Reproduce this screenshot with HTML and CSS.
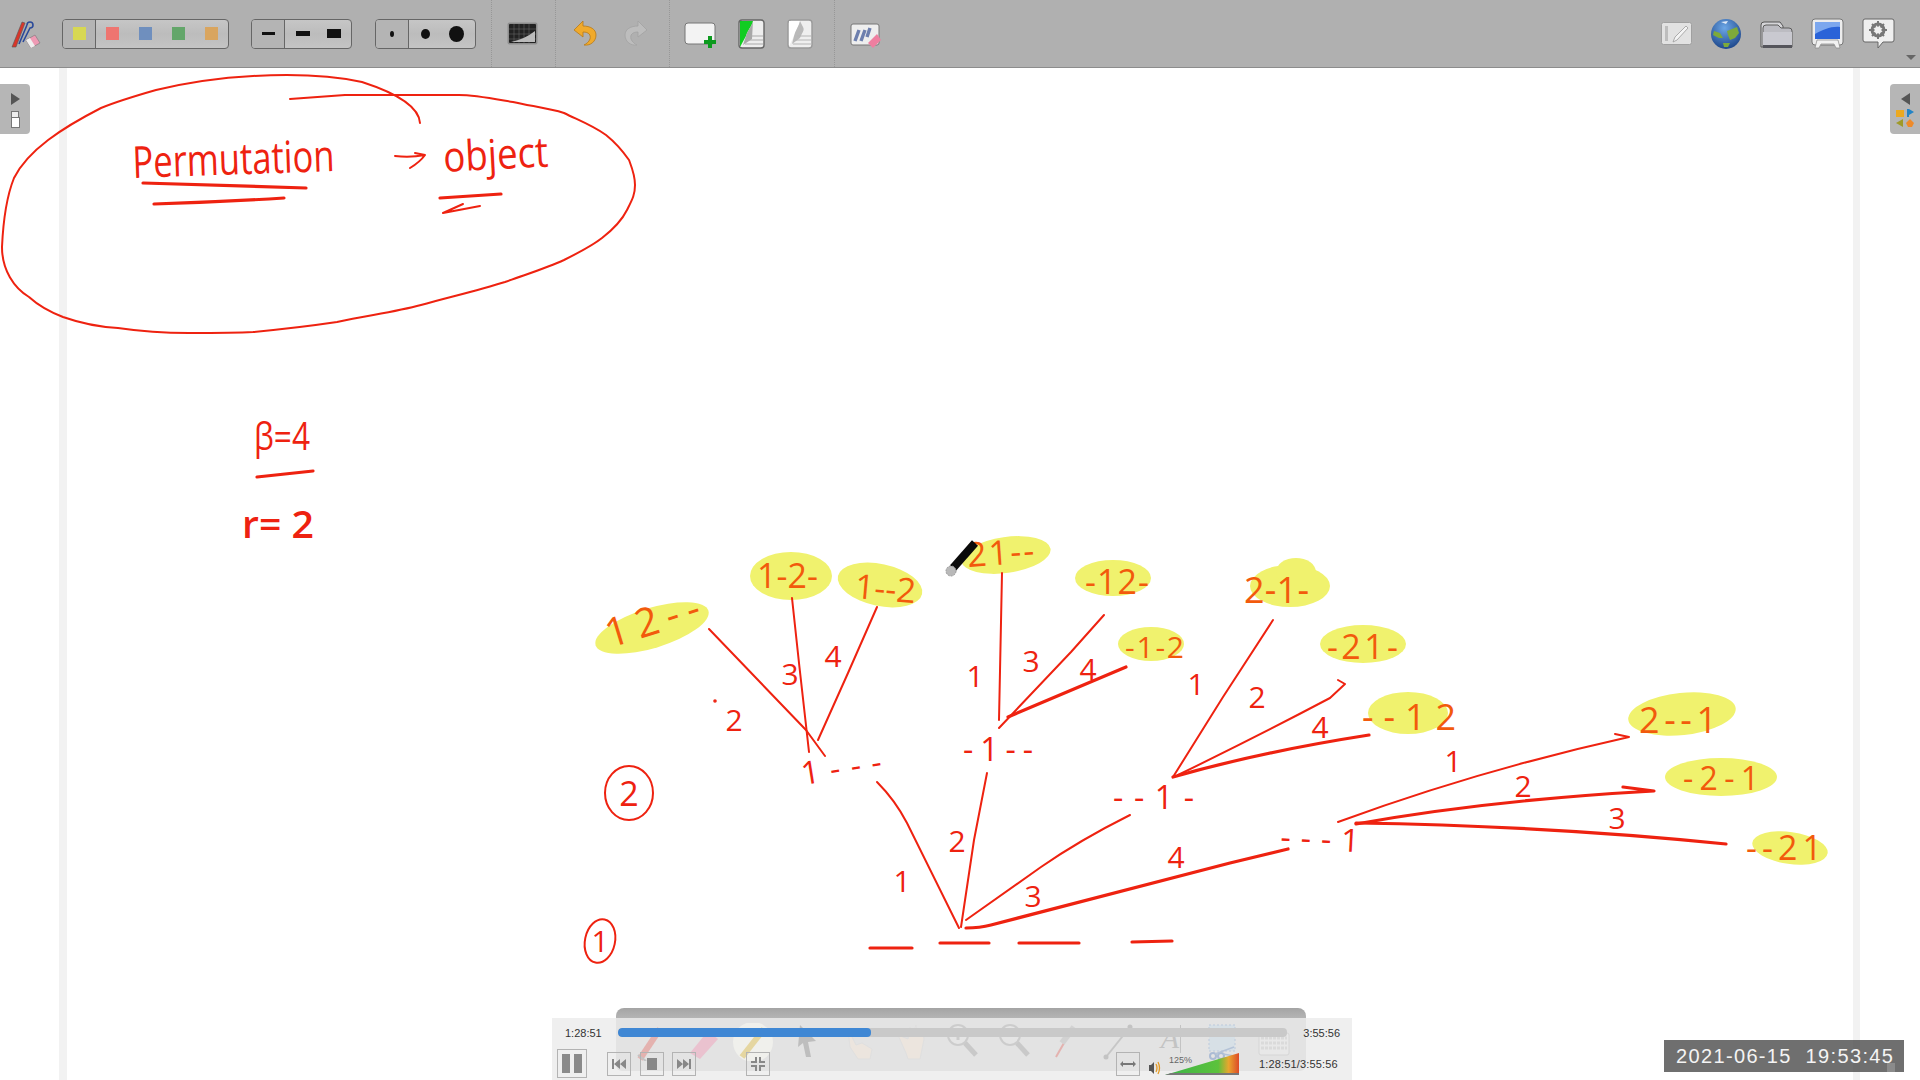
FILE: index.html
```html
<!DOCTYPE html>
<html lang="en">

<head>
    <meta charset="UTF-8">
    <title>Recording playback</title>
    <link rel="stylesheet" href="styles.css">
</head>

<body>
    <div class="app">
        <header class="toolbar">
            <div class="tool-section sec-pens">
                <svg class="ic-pens" width="31" height="28" viewBox="0 0 31 28">
                    <path d="M2 27 L12 2 L15 3 L6 27 Z" fill="#d8362a" stroke="#555" stroke-width=".6" />
                    <path d="M9 24 L17 5 M17 5 a3 3 0 1 1 3 3 L13 22" fill="none" stroke="#2b4a9a" stroke-width="1.6" />
                    <path d="M16 20 L25 15 L30 23 L21 28 Z" fill="#ee9ab4" stroke="#777" stroke-width=".6" />
                    <path d="M16 20 L20 18 L25 26 L21 28 Z" fill="#eee" />
                </svg>
                <div class="seg seg-colors">
                    <span class="cell cell-on"><i class="swatch sw-yellow"></i></span>
                    <span class="cell-rest">
                        <i class="swatch sw-red"></i>
                        <i class="swatch sw-blue"></i>
                        <i class="swatch sw-green"></i>
                        <i class="swatch sw-orange"></i>
                    </span>
                </div>
                <div class="seg seg-mid">
                    <span class="cell cell-on"><i class="bar bar1"></i></span>
                    <span class="cell-rest">
                        <i class="bar bar2"></i>
                        <i class="bar bar3"></i>
                    </span>
                </div>
                <div class="seg seg-mid seg-dots">
                    <span class="cell cell-on"><i class="dot dot1"></i></span>
                    <span class="cell-rest">
                        <i class="dot dot2"></i>
                        <i class="dot dot3"></i>
                    </span>
                </div>
            </div>
            <div class="tool-section sec-board">
                <svg width="31" height="23" viewBox="0 0 31 23">
                    <rect x=".5" y=".5" width="30" height="22" rx="2" fill="#8d8d8d" />
                    <rect x="2" y="2" width="27" height="19" rx="1" fill="#222" />
                    <path d="M7 2 V21 M12 2 V21 M17 2 V21 M22 2 V21 M2 7 H29 M2 12 H29 M2 17 H29" stroke="#666" stroke-width=".6" />
                    <path d="M4 20 Q18 17 28 9 V20 Z" fill="#bbb" />
                </svg>
            </div>
            <div class="tool-section sec-history">
                <svg width="24" height="27" viewBox="0 0 24 27">
                    <path d="M10 1 L1 10 L10 17 V12 C16 12 18 15 17 19 C16 22 13 24 11 25 C18 26 23 21 23 15 C23 9 17 6 10 6 Z" fill="#f0aa2c" stroke="#b87a18" stroke-width=".8" />
                </svg>
                <svg width="24" height="27" viewBox="0 0 24 27">
                    <path d="M14 1 L23 10 L14 17 V12 C8 12 6 15 7 19 C8 22 11 24 13 25 C6 26 1 21 1 15 C1 9 7 6 14 6 Z" fill="#bdbdbd" stroke="#a2a2a2" stroke-width=".8" />
                </svg>
            </div>
            <div class="tool-section sec-pages">
                <svg class="ic-down" width="32" height="26" viewBox="0 0 32 26">
                    <rect x="1" y="1" width="30" height="21" rx="3" fill="#f3f3f3" stroke="#777" />
                    <path d="M24 14 H28 V18 H32 V22 H28 V26 H24 V22 H20 V18 H24 Z" fill="#0c9a1e" />
                </svg>
                <svg width="27" height="30" viewBox="0 0 27 30">
                    <rect x="1" y="1" width="25" height="28" rx="3" fill="#eee" stroke="#666" stroke-width="1.4" />
                    <path d="M2 2 H15 C14 7 9 12 8 17 L2 28 Z" fill="#12cc22" />
                    <path d="M15 2 C14 7 9 12 8 17 L5 26 L14 20 Z" fill="#a8a8a8" />
                    <path d="M11 17 H25 M9 21 H25 M7 25 H25" stroke="#aaa" />
                </svg>
                <svg width="26" height="30" viewBox="0 0 26 30">
                    <rect x="1" y="1" width="24" height="28" rx="3" fill="#efefef" stroke="#9a9a9a" stroke-width="1.4" />
                    <path d="M2 2 H13 C12 7 8 12 7 17 L2 27 Z" fill="#fff" />
                    <path d="M13 2 C12 7 8 12 7 17 L5 25 L13 19 C15 14 18 11 16 8 Z" fill="#b9b9b9" />
                    <path d="M10 17 H24 M8 21 H24 M6 25 H24" stroke="#b5b5b5" />
                </svg>
            </div>
            <div class="tool-section sec-erase">
                <svg class="ic-down" width="31" height="25" viewBox="0 0 31 25">
                    <rect x="1" y="1" width="28" height="21" rx="2" fill="#eee" stroke="#777" />
                    <path d="M5 18 L9 7 M11 18 L15 7 M17 14 L20 5" stroke="#6d7fae" stroke-width="3.4" />
                    <path d="M18 20 L27 11 L31 17 L23 25 Z" fill="#ee7fa0" />
                </svg>
            </div>
            <div class="tool-section sec-right">
                <svg width="31" height="23" viewBox="0 0 31 23">
                    <rect x=".5" y=".5" width="30" height="22" rx="2" fill="#e2e2e2" stroke="#a0a0a0" />
                    <rect x="4" y="4" width="3" height="15" fill="#bdbdbd" />
                    <path d="M12 20 L14 15 L25 4 L27 6 L16 18 Z" fill="#f4f4f4" stroke="#9a9a9a" stroke-width=".8" />
                </svg>
                <svg width="32" height="32" viewBox="0 0 32 32">
                    <defs>
                        <radialGradient id="globeSea" cx=".45" cy=".3" r=".8">
                            <stop offset="0" stop-color="#6da7e6" />
                            <stop offset="1" stop-color="#123a80" />
                        </radialGradient>
                    </defs>
                    <circle cx="16" cy="16" r="15" fill="url(#globeSea)" />
                    <path d="M17 13 L27 9 L29 15 L25 20 L20 22 L18 17 Z M4 13 L10 15 L13 20 L9 20 L3 17 Z M13 25 L20 25 L18 29 L14 29 Z" fill="#7daa3a" />
                    <path d="M11 4 L18 3 L16 6 Z" fill="#dfe9f7" />
                </svg>
                <svg width="33" height="28" viewBox="0 0 33 28">
                    <path d="M1 5 Q1 2 4 2 H20 L23 6 V27 H1 Z" fill="#d5d5d8" stroke="#555" />
                    <path d="M3 8 Q3 5 6 5 H18 L21 8 H29 Q32 8 32 11 V27 H3 Z" fill="#bcbcc2" stroke="#5c5c5c" />
                    <path d="M3 12 H32 V25 Q32 28 29 28 H5 Q3 28 3 25 Z" fill="#c9c9d0" />
                    <path d="M3 25 H32 V28 H3 Z" fill="#55555c" />
                </svg>
                <svg width="33" height="31" viewBox="0 0 33 31">
                    <rect x="1" y="1" width="31" height="26" rx="3" fill="#ededed" stroke="#777" />
                    <rect x="4" y="4" width="25" height="17" fill="#2a63d8" />
                    <path d="M4 4 H29 V9 C20 8 12 12 4 16 Z" fill="#7ca7ee" />
                    <path d="M6 22 H27 L29 30 H25 L23 26 H10 L8 30 H4 Z" fill="#f2f2f2" stroke="#888" stroke-width=".7" />
                </svg>
                <svg width="33" height="31" viewBox="0 0 33 31">
                    <path d="M3 1 H30 Q32 1 32 3 V22 Q32 24 30 24 H21 L16 30 L16 24 H3 Q1 24 1 22 V3 Q1 1 3 1 Z" fill="#efefef" stroke="#666" />
                    <circle cx="16" cy="12" r="6" fill="none" stroke="#777" stroke-width="3" />
                    <path d="M16 3 V21 M7 12 H25 M10 6 L22 18 M22 6 L10 18" stroke="#777" stroke-width="2" />
                    <circle cx="16" cy="12" r="3.6" fill="#efefef" />
                </svg>
                <i class="caret"></i>
            </div>
        </header>

        <main class="canvas">
            <svg class="board" width="1920" height="1012" viewBox="0 68 1920 1012">
                <rect class="gutter" x="59" y="68" width="8" height="1012" />
                <rect class="gutter" x="1853" y="68" width="7" height="1012" />

                <!-- highlighter marks -->
                <g class="marks">
                    <ellipse cx="652" cy="628" rx="59" ry="20" transform="rotate(-17 652 628)" />
                    <ellipse cx="791" cy="576" rx="41" ry="24" />
                    <ellipse cx="880" cy="585" rx="43" ry="21" transform="rotate(12 880 585)" />
                    <ellipse cx="1006" cy="555" rx="45" ry="18" transform="rotate(-8 1006 555)" />
                    <ellipse cx="1113" cy="578" rx="38" ry="18" />
                    <ellipse cx="1151" cy="644" rx="33" ry="17" />
                    <ellipse cx="1290" cy="586" rx="40" ry="21" />
                    <ellipse cx="1296" cy="572" rx="20" ry="14" />
                    <ellipse cx="1363" cy="644" rx="43" ry="19" />
                    <ellipse cx="1408" cy="713" rx="40" ry="21" />
                    <ellipse cx="1682" cy="714" rx="54" ry="21" transform="rotate(-6 1682 714)" />
                    <ellipse cx="1721" cy="777" rx="56" ry="19" />
                    <ellipse cx="1790" cy="848" rx="38" ry="16" transform="rotate(8 1790 848)" />
                </g>

                <!-- ring round the heading -->
                <path class="ink" d="M420 123 C419 107 396 93 362 82 C330 75 290 74 253 76 C215 78 185 83 156 90 C135 96 118 101 101 108 C62 128 28 150 14 178 C6 198 3 225 2 247 C2 270 14 288 29 297 C40 307 50 312 63 317 C80 323 100 327 118 328 C145 332 170 333 189 333 C215 333 235 333 253 332 C285 329 310 326 337 322 C370 315 395 312 421 305 C450 297 480 290 505 282 C527 274 547 268 564 260 C580 252 592 246 602 238 C615 228 622 220 627 210 C632 200 635 195 635 185 C635 175 632 168 629 160 C622 150 616 143 606 135 C592 125 578 120 564 113 C548 108 530 106 513 102 C495 99 475 95 459 95 L345 95 L290 99" />
                <path class="ink thick" d="M143 183 L306 188 M154 204 Q220 202 284 198" />
                <path class="ink" d="M395 156 Q410 158 425 155 M415 153 L425 155 Q420 162 410 168" />
                <path class="ink thick" d="M440 198 L501 194" />
                <path class="ink" d="M463 204 L443 213 L480 206" />
                <path class="ink thick" d="M257 477 L313 471" />

                <text class="hand" x="133" y="178" textLength="202" lengthAdjust="spacingAndGlyphs" font-size="44" transform="rotate(-2 133 178)">Permutation</text>
                <text class="hand" x="444" y="172" textLength="105" lengthAdjust="spacingAndGlyphs" font-size="42" transform="rotate(-3 444 172)">object</text>
                <text class="hand" x="254" y="450" textLength="56" lengthAdjust="spacingAndGlyphs" font-size="38">β=4</text>
                <text class="hand bold" x="242" y="538" textLength="72" lengthAdjust="spacingAndGlyphs" font-size="38">r= 2</text>

                <!-- tree, first level -->
                <path class="ink" d="M877 782 Q895 800 907 823 L959 928" />
                <path class="ink" d="M987 773 L974 840 L961 927" />
                <path class="ink" d="M1130 815 Q1080 840 1041 867 L966 920" />
                <path class="ink thick" d="M966 928 Q980 928 991 925 L1230 863 L1288 849" />
                <path class="ink thick" d="M870 948 H912 M940 943 H989 M1019 943 H1079 M1132 942 L1172 941" />

                <!-- tree, second level -->
                <path class="ink" d="M709 629 L806 730 L825 756" />
                <path class="ink" d="M792 598 L799 663 L809 752" />
                <path class="ink" d="M877 607 L848 673 L818 740" />
                <path class="ink" d="M1002 573 L999 720" />
                <path class="ink" d="M1104 615 L1071 652 L999 728" />
                <path class="ink thick" d="M1126 667 L1008 717" />
                <path class="ink" d="M1273 620 L1223 697 L1173 777" />
                <path class="ink" d="M1338 680 L1345 684 L1330 698 Q1260 735 1178 775" />
                <path class="ink thick" d="M1369 735 Q1260 752 1173 777" />
                <path class="ink" d="M1338 822 Q1480 770 1629 737 L1615 734" />
                <path class="ink thick" d="M1356 824 Q1490 800 1654 791 L1623 787" />
                <path class="ink thick" d="M1356 823 Q1550 826 1726 844" />

                <!-- slot labels -->
                <text class="hand" x="803" y="785" textLength="81" font-size="32" transform="rotate(-9 803 785)">1---</text>
                <text class="hand" x="963" y="761" textLength="70" font-size="32">-1--</text>
                <text class="hand" x="1113" y="809" textLength="81" font-size="32">--1-</text>
                <text class="hand" x="1280" y="848" textLength="79" font-size="32" transform="rotate(3 1280 848)">---1</text>

                <!-- highlighted leaves -->
                <g class="lit">
                    <text class="hand" x="610" y="648" textLength="97" font-size="40" transform="rotate(-17 610 648)">12--</text>
                    <text class="hand" x="757" y="588" textLength="61" font-size="34">1-2-</text>
                    <text class="hand" x="854" y="598" textLength="61" font-size="34" transform="rotate(5 854 598)">1--2</text>
                    <text class="hand" x="968" y="567" textLength="67" font-size="34" transform="rotate(-4 968 567)">21--</text>
                    <text class="hand" x="1085" y="594" textLength="64" font-size="34">-12-</text>
                    <text class="hand" x="1125" y="658" textLength="59" font-size="30">-1-2</text>
                    <text class="hand" x="1244" y="603" textLength="65" font-size="36">2-1-</text>
                    <text class="hand" x="1327" y="659" textLength="71" font-size="34">-21-</text>
                    <text class="hand" x="1362" y="730" textLength="94" font-size="36">--12</text>
                    <text class="hand" x="1639" y="733" textLength="78" font-size="36">2--1</text>
                    <text class="hand" x="1683" y="790" textLength="76" font-size="32">-2-1</text>
                    <text class="hand" x="1746" y="860" textLength="76" font-size="34">--21</text>
                </g>

                <!-- branch numbers -->
                <g class="nums">
                    <text class="hand" x="734" y="731">2</text>
                    <text class="hand" x="790" y="685">3</text>
                    <text class="hand" x="833" y="667">4</text>
                    <text class="hand" x="975" y="687">1</text>
                    <text class="hand" x="1031" y="672">3</text>
                    <text class="hand" x="1088" y="680">4</text>
                    <text class="hand" x="1196" y="695">1</text>
                    <text class="hand" x="957" y="852">2</text>
                    <text class="hand" x="902" y="892">1</text>
                    <text class="hand" x="1033" y="907">3</text>
                    <text class="hand" x="1176" y="868">4</text>
                    <text class="hand" x="1257" y="708">2</text>
                    <text class="hand" x="1320" y="738">4</text>
                    <text class="hand" x="1453" y="772">1</text>
                    <text class="hand" x="1523" y="797">2</text>
                    <text class="hand" x="1617" y="829">3</text>
                </g>

                <ellipse class="ink" cx="629" cy="793" rx="24" ry="27" />
                <text class="hand" x="629" y="806" text-anchor="middle" font-size="34">2</text>
                <ellipse class="ink" cx="600" cy="941" rx="15" ry="22" transform="rotate(12 600 941)" />
                <text class="hand" x="600" y="952" text-anchor="middle" font-size="30">1</text>
                <circle class="ink" cx="715" cy="701" r=".8" />

                <!-- pen cursor -->
                <path class="pen" d="M953 568 L975 543" />
                <circle class="pen-tip" cx="951" cy="571" r="5" />
            </svg>

            <div class="tab tab-left">
                <i class="tri tri-right"></i>
                <span class="tab-page"></span>
                <span class="tab-page tab-page-big"></span>
            </div>
            <div class="tab tab-right">
                <i class="tri tri-left"></i>
                <svg width="20" height="20" viewBox="0 0 20 20">
                    <rect x="1" y="2" width="8" height="7" fill="#eca921" />
                    <path d="M12 1 H14 L19 4 L14 7 V9 H12 Z" fill="#2384c6" />
                    <path d="M1 15 L8 11 V19 Z" fill="#9f9a28" />
                    <path d="M15 11 L19 15 L17 19 H13 L11 15 Z" fill="#ee8a2a" />
                </svg>
            </div>

            <div class="player">
                <div class="player-band"></div>
                <div class="player-body">
                    <div class="player-shade"></div>
                    <div class="faint-tools">
                        <svg width="52" height="38" viewBox="0 0 52 38"><path d="M16 36 L36 6" stroke="#e58b86" stroke-width="6" /><path d="M14 32 L22 38" stroke="#aaa" stroke-width="2" /></svg>
                        <svg width="52" height="38" viewBox="0 0 52 38"><path d="M14 30 L32 8 L42 16 L24 36 Z" fill="#f0a8c0" /></svg>
                        <svg width="52" height="38" viewBox="0 0 52 38"><circle cx="25" cy="19" r="20" fill="#fbfbf4" /><path d="M14 34 L36 6" stroke="#e8cd6a" stroke-width="6" /></svg>
                        <svg width="52" height="38" viewBox="0 0 52 38"><path d="M20 2 L36 18 L28 19 L31 34 L26 34 L23 20 L18 24 Z" fill="#a0a0a0" /></svg>
                        <svg width="52" height="38" viewBox="0 0 52 38"><path d="M16 6 L24 22 L30 20 L40 26 L38 36 L26 36 L18 24 Z" fill="#f4e7da" stroke="#ddd" /></svg>
                        <svg width="52" height="38" viewBox="0 0 52 38"><path d="M14 12 L22 30 L24 36 H36 L40 16 L38 6 L34 14 L32 2 L28 14 L26 4 L24 16 Z" fill="#f4e7da" stroke="#ddd" /></svg>
                        <svg width="52" height="38" viewBox="0 0 52 38"><circle cx="22" cy="12" r="10" fill="#e8e8e8" stroke="#bbb" stroke-width="2" /><path d="M17 12 H27 M22 7 V17" stroke="#bbb" stroke-width="3" /><path d="M29 20 L40 32" stroke="#b5b5b5" stroke-width="5" /></svg>
                        <svg width="52" height="38" viewBox="0 0 52 38"><circle cx="22" cy="12" r="10" fill="#e8e8e8" stroke="#bbb" stroke-width="2" /><path d="M17 12 H27" stroke="#bbb" stroke-width="3" /><path d="M29 20 L40 32" stroke="#b5b5b5" stroke-width="5" /></svg>
                        <svg width="52" height="38" viewBox="0 0 52 38"><path d="M16 34 L24 20" stroke="#e58b86" stroke-width="2" /><path d="M22 20 L34 4" stroke="#c5c5c5" stroke-width="6" /></svg>
                        <svg width="52" height="38" viewBox="0 0 52 38"><path d="M14 34 L38 4" stroke="#b0b0b0" stroke-width="2" /><circle cx="14" cy="34" r="2.5" fill="#aaa" /><circle cx="38" cy="4" r="2.5" fill="#aaa" /></svg>
                        <div class="faint-a">A</div>
                        <svg width="52" height="38" viewBox="0 0 52 38"><rect x="13" y="2" width="26" height="26" fill="#cfdeea" stroke="#9db7d6" stroke-dasharray="2 2" /><circle cx="17" cy="33" r="3" fill="none" stroke="#7f9cc8" stroke-width="2" /><circle cx="25" cy="33" r="3" fill="none" stroke="#7f9cc8" stroke-width="2" /><path d="M19 31 L38 24 M27 31 L38 33" stroke="#8fa9cf" stroke-width="1.5" /></svg>
                        <svg width="52" height="38" viewBox="0 0 52 38"><rect x="11" y="10" width="30" height="22" rx="2" fill="#ededed" stroke="#ccc" /><path d="M13 15 H39 M13 20 H39 M13 25 H39" stroke="#d4d4d4" stroke-width="3" stroke-dasharray="3 1" /></svg>
                    </div>

                    <div class="player-top">
                        <span class="time">1:28:51</span>
                        <div class="track"><div class="track-fill" style="width:37.9%"></div></div>
                        <span class="time">3:55:56</span>
                    </div>
                    <div class="player-bottom">
                        <button class="btn btn-pause"><i></i><i></i></button>
                        <button class="btn btn-prev"><svg width="14" height="12" viewBox="0 0 14 12"><path d="M0 1 H2 V11 H0 Z M8 1 V11 L2 6 Z M14 1 V11 L8 6 Z" fill="#888" /></svg></button>
                        <button class="btn btn-stop"><i></i></button>
                        <button class="btn btn-next"><svg width="14" height="12" viewBox="0 0 14 12"><path d="M14 1 H12 V11 H14 Z M6 1 V11 L12 6 Z M0 1 V11 L6 6 Z" fill="#888" /></svg></button>
                        <button class="btn btn-full"><svg width="14" height="14" viewBox="0 0 14 14"><path d="M4 0 H6 V6 H0 V4 H4 Z M8 0 H10 V4 H14 V6 H8 Z M0 8 H6 V14 H4 V10 H0 Z M8 8 H14 V10 H10 V14 H8 Z" fill="#888" /></svg></button>
                        <button class="btn btn-fit"><svg width="16" height="6" viewBox="0 0 16 6"><path d="M0 3 L3 0 V2 H13 V0 L16 3 L13 6 V4 H3 V6 Z" fill="#777" /></svg></button>
                        <svg class="speaker" width="12" height="16" viewBox="0 0 12 16">
                            <path d="M0 5 H2 L5 2 V14 L2 11 H0 Z" fill="#555" />
                            <path d="M7 4 Q9 8 7 12 M9 2 Q12 8 9 14" fill="none" stroke="#e59a22" stroke-width="1.3" />
                        </svg>
                        <div class="volume">
                            <span class="vol-label">125%</span>
                            <svg width="74" height="22" viewBox="0 0 74 22">
                                <defs>
                                    <linearGradient id="volFill" x1="0" x2="1" y1="0" y2="0">
                                        <stop offset="0" stop-color="#3cb34a" />
                                        <stop offset=".72" stop-color="#5cc23c" />
                                        <stop offset=".86" stop-color="#e9a52e" />
                                        <stop offset="1" stop-color="#dd4a28" />
                                    </linearGradient>
                                </defs>
                                <path d="M0 22 L74 0 V22 Z" fill="url(#volFill)" />
                                <path d="M0 22 H74 V20 H6 Z" fill="#777" />
                            </svg>
                        </div>
                        <span class="time time-total">1:28:51/3:55:56</span>
                    </div>
                </div>
            </div>

            <div class="stamp">2021-06-15&nbsp;&nbsp;19:53:45<i class="stamp-mark"></i></div>
        </main>
    </div>
</body>

</html>
```

FILE: styles.css
```css
* {
    box-sizing: border-box;
}

body {
    margin: 0;
    background-color: #fff;
}

.app {
    width: 1920px;
    height: 1080px;
    overflow: hidden;
}

/* top toolbar */
.toolbar {
    display: flex;
    height: 68px;
    background-color: #b0b0b0;
    border-bottom: 1px solid #8c8c8c;
}

.tool-section {
    display: flex;
    align-items: center;
    height: 67px;
    border-left: 1px dotted #979797;
}

.sec-pens {
    width: 491px;
    padding-left: 10px;
    border-left: none;
}

.sec-board {
    width: 64px;
    padding-left: 15px;
}

.sec-history {
    width: 114px;
    padding-left: 17px;
    gap: 27px;
}

.sec-pages {
    width: 165px;
    padding-left: 14px;
    gap: 22px;
}

.sec-erase {
    width: 827px;
    padding-left: 15px;
}

.sec-right {
    flex: 1;
    position: relative;
    gap: 18px;
    border-left: none;
}

.sec-right svg {
    flex-shrink: 0;
}

.ic-pens {
    margin-right: 21px;
}

.ic-down {
    margin-top: 3px;
}

.caret {
    position: absolute;
    right: 4px;
    top: 55px;
    border-top: 5px solid #666;
    border-left: 5px solid transparent;
    border-right: 5px solid transparent;
}

.seg {
    display: flex;
    height: 30px;
    border: 1px solid #666;
    border-radius: 4px;
    background: linear-gradient(#c6c6c6, #bcbcbc 50%, #c4c4c4);
    overflow: hidden;
}

.seg-colors {
    width: 167px;
}

.seg-mid {
    width: 101px;
    margin-left: 22px;
}

.seg-dots {
    margin-left: 23px;
}

.cell {
    display: flex;
    align-items: center;
    justify-content: center;
    width: 33px;
    border-right: 1px solid #666;
}

.cell-on {
    background: #b4b4b4;
}

.cell-rest {
    flex: 1;
    display: flex;
    align-items: center;
    justify-content: space-around;
}

.seg-mid .cell-rest {
    padding: 0 2px;
}

.swatch {
    display: block;
    width: 13px;
    height: 13px;
}

.sw-yellow { background-color: #d7d853; }
.sw-red { background-color: #ee7570; }
.sw-blue { background-color: #6f8fbe; }
.sw-green { background-color: #63a66a; }
.sw-orange { background-color: #d9a55f; }

.bar {
    display: block;
    background-color: #111;
}

.bar1 { width: 13px; height: 3px; }
.bar2 { width: 14px; height: 5px; }
.bar3 { width: 14px; height: 9px; }

.dot {
    display: block;
    background-color: #111;
    border-radius: 50%;
}

.dot1 { width: 4px; height: 6px; }
.dot2 { width: 9px; height: 10px; }
.dot3 { width: 15px; height: 16px; }

/* whiteboard */
.canvas {
    position: relative;
    height: 1012px;
    background-color: #fff;
}

.board {
    display: block;
}

.gutter {
    fill: #f2f2f2;
}

.marks ellipse {
    fill: #f0f26e;
}

.ink {
    fill: none;
    stroke: #ee2210;
    stroke-width: 2;
    stroke-linecap: round;
    stroke-linejoin: round;
}

.thick {
    stroke-width: 3.2;
}

.hand {
    font-family: "Open Sans", sans-serif;
    font-weight: 400;
    fill: #ee2210;
}

.bold {
    font-weight: 600;
}

.lit .hand {
    fill: #f25a0c;
}

.nums .hand {
    font-size: 30px;
    text-anchor: middle;
}

.pen {
    stroke: #0a0a0a;
    stroke-width: 8;
    fill: none;
}

.pen-tip {
    fill: #b9b9b9;
    stroke: #999;
    stroke-dasharray: 2 1;
}

/* side tabs */
.tab {
    position: absolute;
    top: 16px;
    display: flex;
    flex-direction: column;
    align-items: center;
    width: 30px;
    height: 50px;
    padding-top: 9px;
    background-color: #b6b6b6;
}

.tab-left {
    left: 0;
    border-radius: 0 4px 4px 0;
}

.tab-right {
    right: 0;
    border-radius: 4px 0 0 4px;
}

.tri {
    display: block;
    width: 0;
    border-top: 6px solid transparent;
    border-bottom: 6px solid transparent;
}

.tri-right {
    margin-bottom: 6px;
    border-left: 9px solid #555;
}

.tri-left {
    margin-bottom: 3px;
    border-right: 9px solid #555;
}

.tab-page {
    width: 8px;
    height: 7px;
    background-color: #eee;
    border: 1px solid #777;
    margin-bottom: -1px;
}

.tab-page-big {
    width: 9px;
    height: 11px;
    background-color: #fff;
}

/* playback bar */
.player {
    position: absolute;
    left: 552px;
    bottom: 0;
    width: 800px;
}

.player-band {
    height: 10px;
    margin: 0 46px 0 64px;
    background: linear-gradient(#a4a4a4, #b4b4b4);
    border-radius: 8px 8px 0 0;
}

.player-body {
    position: relative;
    height: 62px;
    background-color: #efefef;
}

.player-shade {
    position: absolute;
    left: 64px;
    right: 46px;
    top: 0;
    bottom: 9px;
    background-color: #e3e3e3;
    border-radius: 0 0 6px 6px;
}

.faint-tools {
    position: absolute;
    left: 72px;
    top: 5px;
    display: flex;
    opacity: 0.55;
}

.faint-a {
    position: relative;
    width: 52px;
    height: 30px;
    font-family: "Liberation Serif", serif;
    font-style: italic;
    font-size: 30px;
    line-height: 30px;
    text-align: center;
    color: #aaa;
}

.faint-a::after {
    content: "";
    position: absolute;
    left: 36px;
    top: 2px;
    width: 1px;
    height: 28px;
    background-color: #aaa;
}

.player-top {
    position: relative;
    display: flex;
    align-items: center;
    gap: 16px;
    height: 31px;
    padding: 0 12px 2px 13px;
}

.time {
    font-family: "Liberation Sans", sans-serif;
    font-size: 11px;
    color: #333;
}

.track {
    flex: 1;
    height: 9px;
    background-color: #c9c9c9;
    border-radius: 4px;
    overflow: hidden;
}

.track-fill {
    height: 100%;
    background-color: #3f87d4;
    border-radius: 4px;
}

.player-bottom {
    position: relative;
    display: flex;
    align-items: center;
    height: 29px;
    padding-left: 5px;
}

.btn {
    display: flex;
    align-items: center;
    justify-content: center;
    width: 24px;
    height: 24px;
    padding: 0;
    background: transparent;
    border: 1px solid #b3b3b3;
}

.btn-pause {
    width: 30px;
    height: 29px;
    gap: 4px;
    margin-right: 20px;
}

.btn-pause i {
    display: block;
    width: 8px;
    height: 19px;
    background-color: #8a8a8a;
}

.btn-stop {
    margin-left: 9px;
}

.btn-stop i {
    display: block;
    width: 10px;
    height: 12px;
    background-color: #888;
}

.btn-next {
    margin-left: 8px;
}

.btn-full {
    margin-left: 50px;
}

.btn-fit {
    margin-left: 346px;
}

.speaker {
    margin: 8px 0 0 9px;
}

.volume {
    position: relative;
    width: 74px;
    height: 22px;
    margin-left: 4px;
}

.vol-label {
    position: absolute;
    left: 4px;
    top: 2px;
    font-family: "Liberation Sans", sans-serif;
    font-size: 9px;
    color: #666;
}

.time-total {
    margin-left: 20px;
    letter-spacing: 0.15px;
}

/* recording timestamp */
.stamp {
    position: absolute;
    left: 1664px;
    top: 972px;
    width: 240px;
    height: 32px;
    padding-left: 12px;
    font-family: "Liberation Sans", sans-serif;
    font-size: 20px;
    line-height: 32px;
    letter-spacing: 1.35px;
    white-space: nowrap;
    color: #f4f4f4;
    background-color: rgba(70, 70, 70, 0.78);
}

.stamp-mark {
    position: absolute;
    right: 9px;
    bottom: 0;
    width: 8px;
    height: 9px;
    background-color: rgba(255, 255, 255, 0.2);
}
```
